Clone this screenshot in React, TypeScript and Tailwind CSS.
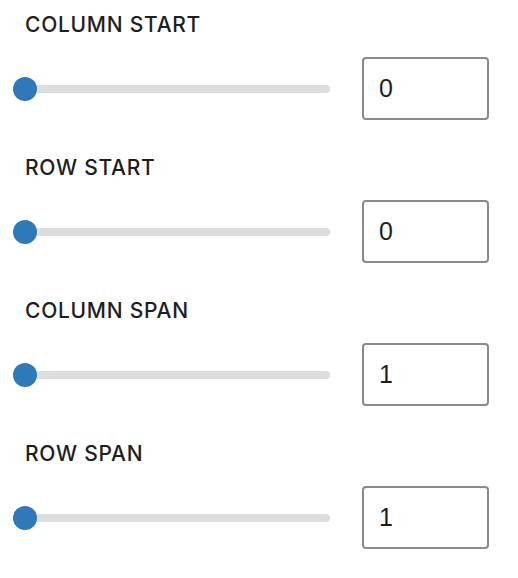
import { useState } from 'react';

interface Field {
  key: string;
  label: string;
  value: number;
  max: number;
}

const initialFields: Field[] = [
  { key: 'colStart', label: 'COLUMN START', value: 0, max: 12 },
  { key: 'rowStart', label: 'ROW START', value: 0, max: 12 },
  { key: 'colSpan', label: 'COLUMN SPAN', value: 1, max: 12 },
  { key: 'rowSpan', label: 'ROW SPAN', value: 1, max: 12 },
];

function SliderRow({ field, onChange }: { field: Field; onChange: (v: number) => void }) {
  const min = field.key.endsWith('Span') ? 1 : 0;
  const pct = ((field.value - min) / (field.max - min)) * 100;

  return (
    <div className="flex flex-col">
      <div
        className="pl-[12px] text-[21px] font-[450] leading-[24px] tracking-[0.035em] text-[#1e1e1e]"
        style={{ fontFamily: 'Inter, "Liberation Sans", sans-serif' }}
      >
        {field.label}
      </div>
      <div className="mt-[20px] flex h-[63px] items-center">
        <div className="relative h-[24px] w-[317px]">
          <div className="absolute left-[12px] right-0 top-[8px] h-[8px] rounded-full bg-[#dddddd]" />
          <div
            className="absolute top-0 h-[24px] w-[24px] rounded-full bg-[#3079b9]"
            style={{ left: `calc(${pct}% * (293 / 317))` }}
          />
        </div>
        <input
          type="text"
          value={field.value}
          onChange={(e) => onChange(Number(e.target.value) || 0)}
          className="ml-[32px] h-[63px] w-[127px] rounded-[4px] border-2 border-[#8a8a8a] bg-white pl-[15px] text-[25px] text-[#1e1e1e] outline-none"
        />
      </div>
    </div>
  );
}

export default function App() {
  const [fields, setFields] = useState(initialFields);

  return (
    <main
      className="min-h-screen bg-white pl-[13px] pt-[13px]"
      style={{ fontFamily: '"Liberation Sans", Arial, sans-serif' }}
    >
      <div className="flex flex-col gap-[36px]">
        {fields.map((f) => (
          <SliderRow
            key={f.key}
            field={f}
            onChange={(v) => setFields((prev) => prev.map((p) => (p.key === f.key ? { ...p, value: v } : p)))}
          />
        ))}
      </div>
    </main>
  );
}
